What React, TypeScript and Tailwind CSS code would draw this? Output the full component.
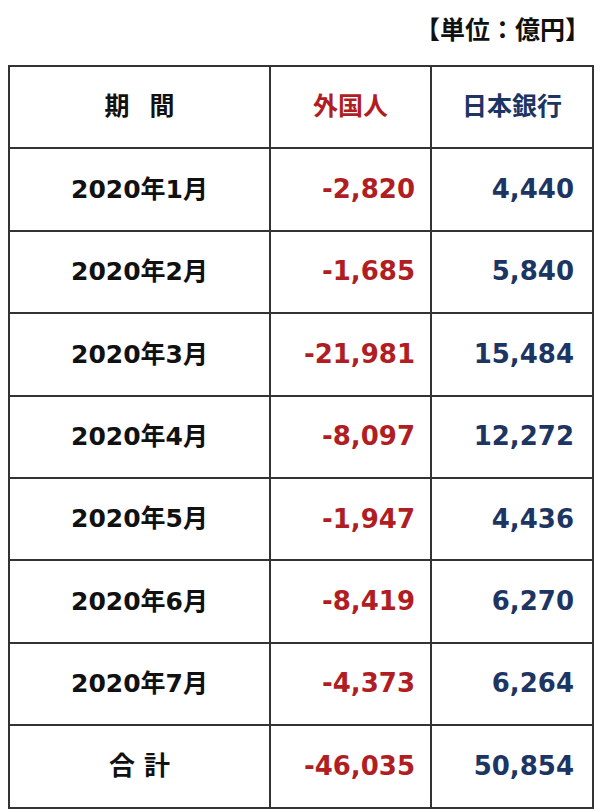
const rows = [
  { label: "2020年1月", foreign: "-2,820", boj: "4,440" },
  { label: "2020年2月", foreign: "-1,685", boj: "5,840" },
  { label: "2020年3月", foreign: "-21,981", boj: "15,484" },
  { label: "2020年4月", foreign: "-8,097", boj: "12,272" },
  { label: "2020年5月", foreign: "-1,947", boj: "4,436" },
  { label: "2020年6月", foreign: "-8,419", boj: "6,270" },
  { label: "2020年7月", foreign: "-4,373", boj: "6,264" },
];

const font = "font-['DejaVu_Sans','Noto_Sans_CJK_JP',sans-serif] font-bold";
const cell = "border-2 border-[#333] h-[82.4px] p-0 align-middle";

export default function App() {
  return (
    <div className={`w-[600px] h-[812px] bg-white ${font} text-[#111]`}>
      <div className="flex justify-end pt-[12px] pr-[10px] h-[65px]">
        <p className="text-[25px] leading-[32px] font-['Noto_Sans_CJK_JP',sans-serif] font-bold">
          【単位：億円】
        </p>
      </div>
      <table className="ml-[8px] w-[584px] border-collapse table-fixed">
        <colgroup>
          <col className="w-[261px]" />
          <col className="w-[161px]" />
          <col className="w-[162px]" />
        </colgroup>
        <thead>
          <tr>
            <th className={`${cell} text-[25px] font-bold`}>
              <span>期</span>
              <span className="inline-block w-[20px]" />
              <span>間</span>
            </th>
            <th className={`${cell} text-[25px] font-bold text-[#b01e23]`}>外国人</th>
            <th className={`${cell} text-[25px] font-bold text-[#1c3563]`}>日本銀行</th>
          </tr>
        </thead>
        <tbody>
          {rows.map((r) => (
            <tr key={r.label}>
              <td className={`${cell} text-center text-[25px]`}>{r.label}</td>
              <td className={`${cell} text-right pr-[15px] text-[26px] text-[#b01e23]`}>
                {r.foreign}
              </td>
              <td className={`${cell} text-right pr-[18px] text-[26px] text-[#1c3563]`}>
                {r.boj}
              </td>
            </tr>
          ))}
          <tr>
            <td className={`${cell} text-center text-[26px]`}>合 計</td>
            <td className={`${cell} text-right pr-[15px] text-[26px] text-[#b01e23]`}>-46,035</td>
            <td className={`${cell} text-right pr-[18px] text-[26px] text-[#1c3563]`}>50,854</td>
          </tr>
        </tbody>
      </table>
    </div>
  );
}
